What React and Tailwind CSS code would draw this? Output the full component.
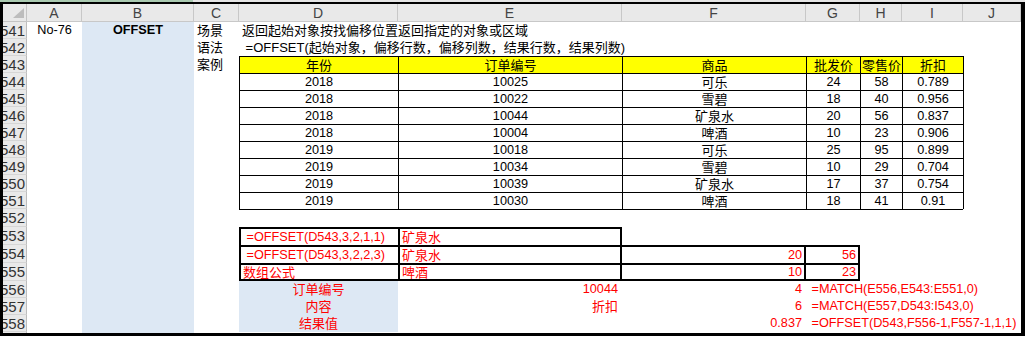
import React from "react";

// 列样式
const L = "justify-start pl-[3px]";
const C = "justify-center";
const TB = "border-l border-t border-black justify-center";
const HD = "border-l border-t border-black justify-center bg-[#ffff00]";
const BLUE = "bg-[#dde8f4]";

const COLS = ["A", "B", "C", "D", "E", "F", "G", "H", "I", "J"];

const DATA = [
  ["2018", "10025", "可乐", "24", "58", "0.789"],
  ["2018", "10022", "雪碧", "18", "40", "0.956"],
  ["2018", "10044", "矿泉水", "20", "56", "0.837"],
  ["2018", "10004", "啤酒", "10", "23", "0.906"],
  ["2019", "10018", "可乐", "25", "95", "0.899"],
  ["2019", "10034", "雪碧", "10", "29", "0.704"],
  ["2019", "10039", "矿泉水", "17", "37", "0.754"],
  ["2019", "10030", "啤酒", "18", "41", "0.91"],
];

// 中文字比西文略宽一点
const hasCjk = (s) => /[\u4e00-\u9fff\uff0c]/.test(s);

// 每行 A..J，null = 空单元格
function buildRows() {
  const rows = [];
  rows.push({
    n: 541,
    cells: [
      ["No-76", C],
      ["OFFSET", "justify-center font-bold"],
      ["场景", L],
      ["返回起始对象按找偏移位置返回指定的对象或区域", L],
    ],
  });
  rows.push({
    n: 542,
    cells: [null, null, ["语法", L], [" =OFFSET(起始对象，偏移行数，偏移列数，结果行数，结果列数)", L]],
  });
  rows.push({
    n: 543,
    cells: [
      null,
      null,
      ["案例", L],
      ["年份", HD],
      ["订单编号", HD],
      ["商品", HD],
      ["批发价", HD],
      ["零售价", HD],
      ["折扣", HD],
      ["", "border-l border-black"],
    ],
  });
  DATA.forEach((d, i) => {
    rows.push({
      n: 544 + i,
      cells: [null, null, null, ...d.map((v) => [v, TB]), ["", "border-l border-black"]],
    });
  });
  rows.push({
    n: 552,
    cells: [
      null,
      null,
      null,
      ["", "border-t border-black"],
      ["", "border-t border-black"],
      ["", "border-t border-black"],
      ["", "border-t border-black"],
      ["", "border-t border-black"],
      ["", "border-t border-black"],
    ],
  });
  rows.push({
    n: 553,
    cells: [
      null,
      null,
      null,
      [" =OFFSET(D543,3,2,1,1)", "border-l-2 border-t-2 border-black justify-start pl-[2px] text-[#ff0000]"],
      ["矿泉水", "border-l-2 border-t-2 border-r-2 border-black justify-start pl-[2px] text-[#ff0000]"],
    ],
  });
  rows.push({
    n: 554,
    cells: [
      null,
      null,
      null,
      [" =OFFSET(D543,3,2,2,3)", "border-l-2 border-t-2 border-black justify-start pl-[2px] text-[#ff0000]"],
      ["矿泉水", "border-l-2 border-t-2 border-r-2 border-black justify-start pl-[2px] text-[#ff0000]"],
      ["20", "border-t-2 border-r-2 border-black justify-end pr-[2px] text-[#ff0000]"],
      ["56", "border-t-2 border-r-2 border-black justify-end pr-[2px] text-[#ff0000]"],
    ],
  });
  rows.push({
    n: 555,
    cells: [
      null,
      null,
      null,
      ["数组公式", "border-l-2 border-t-2 border-b-2 border-black justify-start pl-[2px] text-[#ff0000]"],
      ["啤酒", "border-l-2 border-t-2 border-r-2 border-b-2 border-black justify-start pl-[2px] text-[#ff0000]"],
      ["10", "border-t-2 border-r-2 border-b-2 border-black justify-end pr-[2px] text-[#ff0000]"],
      ["23", "border-t-2 border-r-2 border-b-2 border-black justify-end pr-[2px] text-[#ff0000]"],
    ],
  });
  const bottom = [
    ["订单编号", "10044", "4", " =MATCH(E556,E543:E551,0)"],
    ["内容", "折扣", "6", " =MATCH(E557,D543:I543,0)"],
    ["结果值", "", "0.837", " =OFFSET(D543,F556-1,F557-1,1,1)"],
  ];
  bottom.forEach((b, i) => {
    rows.push({
      n: 556 + i,
      cells: [
        null,
        null,
        null,
        [b[0], "justify-center bg-[#dde8f4] text-[#ff0000]"],
        [b[1], "justify-end pr-[4px] text-[#ff0000]"],
        [b[2], "justify-end pr-[4px] text-[#ff0000]"],
        [b[3], "justify-start pl-[2px] text-[#ff0000]"],
      ],
    });
  });
  return rows;
}

const cellBase = "flex items-center min-w-0 overflow-visible whitespace-pre leading-none";

export default function App() {
  const rows = buildRows();

  return (
    <div className="w-[1025px] h-[338px] overflow-hidden bg-white font-['Liberation_Sans','Noto_Sans_CJK_SC',sans-serif] text-[12.7px] text-black">
      <div className="flex h-[2px]">
        <div className="w-[193px] bg-[#a9c9b0]" />
        <div className="flex-1 bg-[#e4e4e4]" />
      </div>
      <div className="h-[334px] border-l-[3px] border-t-2 border-r-4 border-b-[3px] border-black">
        <div className="grid h-[329px] grid-cols-[24px_55px_112px_45px_159px_224px_184px_54px_42px_61px_58px] grid-rows-[18px_repeat(11,17px)_repeat(4,18px)_repeat(3,17px)_1px]">
          {/* 左上角 */}
          <div className="relative bg-[#e9e9e9] border-r border-b border-[#c4c4c4]">
            <svg className="absolute right-[2px] bottom-[3px]" width="11" height="10" viewBox="0 0 11 10">
              <polygon points="11,0 11,10 0,10" fill="#bdbdbd" />
            </svg>
          </div>
          {COLS.map((col) => (
            <div
              key={col}
              className="flex items-center justify-center bg-[#e9e9e9] border-r border-b border-[#c8c8c8] text-[14px] text-[#444] leading-none">
              {col}
            </div>
          ))}

          {rows.map((r) => (
            <React.Fragment key={r.n}>
              <div className="flex items-center justify-end overflow-hidden bg-[#e9e9e9] border-r border-b border-r-[#bdbdbd] border-b-[#d6d6d6] pr-[1px] text-[15px] text-[#333] leading-none">
                {r.n}
              </div>
              {COLS.map((col, i) => {
                const cell = r.cells[i];
                const extra = col === "B" ? BLUE : "";
                if (!cell) return <div key={col} className={`${cellBase} ${extra}`} />;
                const size = hasCjk(cell[0]) ? "text-[13px]" : "";
                return (
                  <div key={col} className={`${cellBase} ${extra} ${size} ${cell[1]}`}>
                    {cell[0]}
                  </div>
                );
              })}
            </React.Fragment>
          ))}

          {/* 559 行露出的一点 */}
          <div className="bg-[#e9e9e9] border-r border-[#bdbdbd]" />
          {COLS.map((col) => (
            <div key={col} className={col === "B" ? BLUE : ""} />
          ))}
        </div>
      </div>
    </div>
  );
}
